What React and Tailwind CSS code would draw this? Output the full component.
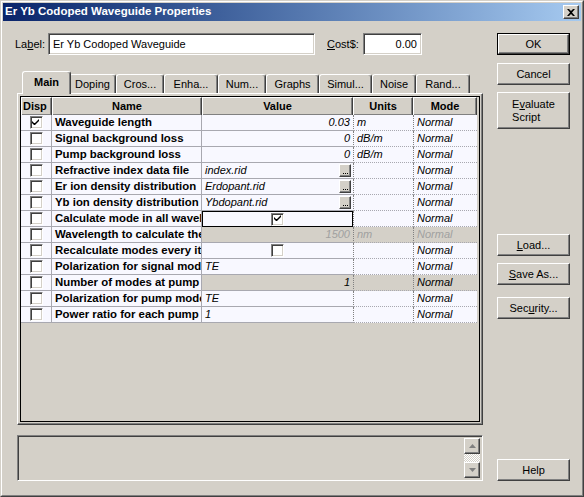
import React from 'react';

const font = "font-['Liberation_Sans',Arial,sans-serif]";
const raised =
    'bg-[#d4d0c8] border border-t-white border-l-white border-r-[#404040] border-b-[#404040] shadow-[inset_-1px_-1px_0_#808080]';
const sunken =
    'border border-t-[#808080] border-l-[#808080] border-r-white border-b-white shadow-[inset_1px_1px_0_#404040,inset_-1px_-1px_0_#d4d0c8]';

function Check({ checked }) {
    return (
        <span className={`inline-flex w-[13px] h-[13px] bg-white items-center justify-center ${sunken}`}>
            {checked && (
                <svg width="9" height="9" viewBox="0 0 9 9" className="-ml-px -mt-px">
                    <path d="M1 3v2l2 2h1l4-4v-2l-4 4h-1z" fill="#000" />
                </svg>
            )}
        </span>
    );
}

function Dots() {
    return (
        <span className={`w-[12px] h-[13px] flex items-end justify-center pb-[2px] gap-[1px] ${raised}`}>
            <i className="w-[1px] h-[1px] bg-black" />
            <i className="w-[1px] h-[1px] bg-black" />
            <i className="w-[1px] h-[1px] bg-black" />
        </span>
    );
}

function Button({ children, className = '', def }) {
    const inner = (
        <div className={`w-full h-full flex items-center justify-center text-[11px] text-black leading-[13px] ${raised}`}>
            {children}
        </div>
    );
    return <div className={`w-[73px] ${def ? 'border border-black' : ''} ${className}`}>{inner}</div>;
}

const rows = [
    { on: true, name: 'Waveguide length', value: '0.03', align: 'r', units: 'm' },
    { name: 'Signal background loss', value: '0', align: 'r', units: 'dB/m' },
    { name: 'Pump background loss', value: '0', align: 'r', units: 'dB/m' },
    { name: 'Refractive index data file', value: 'index.rid', file: true },
    { name: 'Er ion density distribution', value: 'Erdopant.rid', file: true },
    { name: 'Yb ion density distribution', value: 'Ybdopant.rid', file: true },
    { name: 'Calculate mode in all wavelengths', box: true, boxOn: true, focus: true },
    { name: 'Wavelength to calculate the mode', value: '1500', align: 'r', units: 'nm', off: true },
    { name: 'Recalculate modes every iteration', box: true },
    { name: 'Polarization for signal mode', value: 'TE' },
    { name: 'Number of modes at pump', value: '1', align: 'r', grey: true },
    { name: 'Polarization for pump mode', value: 'TE' },
    { name: 'Power ratio for each pump', value: '1' },
];

const tabs = [
    ['Main', 49],
    ['Doping', 47],
    ['Cros...', 48],
    ['Enha...', 54],
    ['Num...', 48],
    ['Graphs', 53],
    ['Simul...', 53],
    ['Noise', 44],
    ['Rand...', 54],
];

function Row({ r }) {
    const shade = r.off || r.grey ? 'bg-[#d4d0c8]' : 'bg-[#f8f8ff]';
    const tone = r.off ? 'text-[#a0a0a0]' : 'text-black';
    return (
        <div className="grid grid-cols-[31px_150px_151px_60px_64px] h-[16px] text-[11px] leading-[15px]">
            <div className="bg-[#f8f8ff] border-b border-r border-[#a8a8b0] flex items-center justify-center">
                <Check checked={r.on} />
            </div>
            <div className="bg-[#f8f8ff] border-b border-r border-[#a8a8b0] pl-[3px] font-bold text-[11.4px] whitespace-nowrap overflow-hidden">
                {r.name}
            </div>
            <div
                className={`${shade} border-b border-[#a8a8b0] italic ${tone} flex items-center ${
                    r.focus ? 'border border-black' : ''
                } ${r.align === 'r' ? 'justify-end pr-[3px]' : r.box ? 'justify-center' : 'justify-between pl-[3px] pr-[2px]'}`}
            >
                {r.box ? <Check checked={r.boxOn} /> : <span>{r.value}</span>}
                {r.file && <Dots />}
            </div>
            <div className={`${shade} border-b border-b-[#a8a8b0] border-l border-l-[#808080] border-dotted italic ${tone} pl-[3px]`}>
                {r.units}
            </div>
            <div className={`${shade} border-b border-b-[#a8a8b0] border-l border-l-[#808080] border-dotted border-r-0 italic ${tone} pl-[3px]`}>
                Normal
            </div>
        </div>
    );
}

export default function App() {
    return (
        <div
            className={`w-[584px] h-[497px] bg-[#d4d0c8] border border-t-[#d4d0c8] border-l-[#d4d0c8] border-r-[#404040] border-b-[#404040] ${font} text-black overflow-hidden`}
        >
            <div className="w-full h-full border border-t-white border-l-white border-r-[#808080] border-b-[#808080] p-px flex flex-col">
                {/* title bar */}
                <div className="h-[18px] shrink-0 bg-gradient-to-r from-[#0a246a] to-[#a6caf0] flex items-center justify-between pl-[2px] pr-[2px]">
                    <span className="text-white font-bold text-[11.5px] leading-none">Er Yb Codoped Waveguide Properties</span>
                    <span className={`w-[16px] h-[14px] flex items-center justify-center ${raised}`}>
                        <svg width="8" height="7" viewBox="0 0 8 7">
                            <path d="M0 0h2l2 2 2-2h2l-3 3.5 3 3.5h-2l-2-2-2 2h-2l3-3.5z" fill="#000" />
                        </svg>
                    </span>
                </div>

                <div className="flex flex-1">
                    {/* left column */}
                    <div className="w-[468px] ml-[12px] flex flex-col">
                        <div className="mt-[12px] h-[22px] flex items-center text-[11px]">
                            <span className="w-[33px]">
                                La<u>b</u>el:
                            </span>
                            <div className={`w-[267px] h-[22px] bg-white pl-[4px] flex items-center ${sunken}`}>
                                Er Yb Codoped Waveguide
                            </div>
                            <span className="w-[36px] ml-[12px]">
                                <u>C</u>ost$:
                            </span>
                            <div className={`w-[59px] h-[22px] bg-white pr-[4px] flex items-center justify-end ${sunken}`}>
                                0.00
                            </div>
                        </div>

                        {/* tabs */}
                        <div className="mt-[16px] h-[22px] flex items-end pl-[9px] text-[11px]">
                            {tabs.map(([t, w], i) => (
                                <div
                                    key={t}
                                    style={{ width: w }}
                                    className={`border-t border-l border-t-white border-l-white border-r border-r-[#404040] shadow-[inset_-1px_0_0_#808080] rounded-t-[3px] bg-[#d4d0c8] flex items-center justify-center ${
                                        i === 0
                                            ? 'h-[23px] -mb-px -mx-[2px] relative z-10 font-bold pb-[2px]'
                                            : 'h-[19px]'
                                    }`}
                                >
                                    {t}
                                </div>
                            ))}
                        </div>

                        {/* panel */}
                        <div className="ml-[2px] w-[466px] h-[332px] border border-t-white border-l-white border-r-[#404040] border-b-[#404040] shadow-[inset_-1px_-1px_0_#808080] p-[2px]">
                            <div className="w-full h-full border border-black bg-[#d4d0c8] pr-[2px]">
                                <div className="grid grid-cols-[31px_150px_151px_60px_64px] h-[18px] text-[11px] font-bold">
                                    {['Disp', 'Name', 'Value', 'Units', 'Mode'].map((h, i) => (
                                        <div key={h} className={`flex items-center ${i === 0 ? 'pl-[1px]' : 'justify-center'} ${raised}`}>
                                            {h}
                                        </div>
                                    ))}
                                </div>
                                {rows.map((r) => (
                                    <Row key={r.name} r={r} />
                                ))}
                            </div>
                        </div>

                        {/* note box */}
                        <div className={`ml-[2px] mt-[10px] w-[466px] h-[46px] bg-[#d4d0c8] flex justify-end p-[2px] ${sunken}`}>
                            <div className="w-[16px] flex flex-col">
                                <div className={`h-[16px] flex items-center justify-center ${raised}`}>
                                    <svg width="7" height="4" viewBox="0 0 7 4">
                                        <path d="M3.5 0L7 4H0z" fill="#808080" />
                                    </svg>
                                </div>
                                <div className="flex-1 bg-[repeating-conic-gradient(#ffffff_0_25%,#d4d0c8_0_50%)] bg-[length:2px_2px]" />
                                <div className={`h-[16px] flex items-center justify-center ${raised}`}>
                                    <svg width="7" height="4" viewBox="0 0 7 4">
                                        <path d="M0 0h7L3.5 4z" fill="#808080" />
                                    </svg>
                                </div>
                            </div>
                        </div>
                    </div>

                    {/* right buttons */}
                    <div className="ml-[14px] flex flex-col">
                        <Button def className="mt-[12px] h-[22px]">
                            OK
                        </Button>
                        <Button className="mt-[8px] h-[22px]">Cancel</Button>
                        <Button className="mt-[7px] h-[37px]">
                            <span className="block text-left">
                                E<u>v</u>aluate
                                <br />
                                Script
                            </span>
                        </Button>
                        <Button className="mt-[105px] h-[22px]">
                            <u>L</u>oad...
                        </Button>
                        <Button className="mt-[7px] h-[22px]">
                            <u>S</u>ave As...
                        </Button>
                        <Button className="mt-[12px] h-[22px]">
                            Sec<u>u</u>rity...
                        </Button>
                        <Button className="mt-[140px] h-[22px]">Help</Button>
                    </div>
                </div>
            </div>
        </div>
    );
}
